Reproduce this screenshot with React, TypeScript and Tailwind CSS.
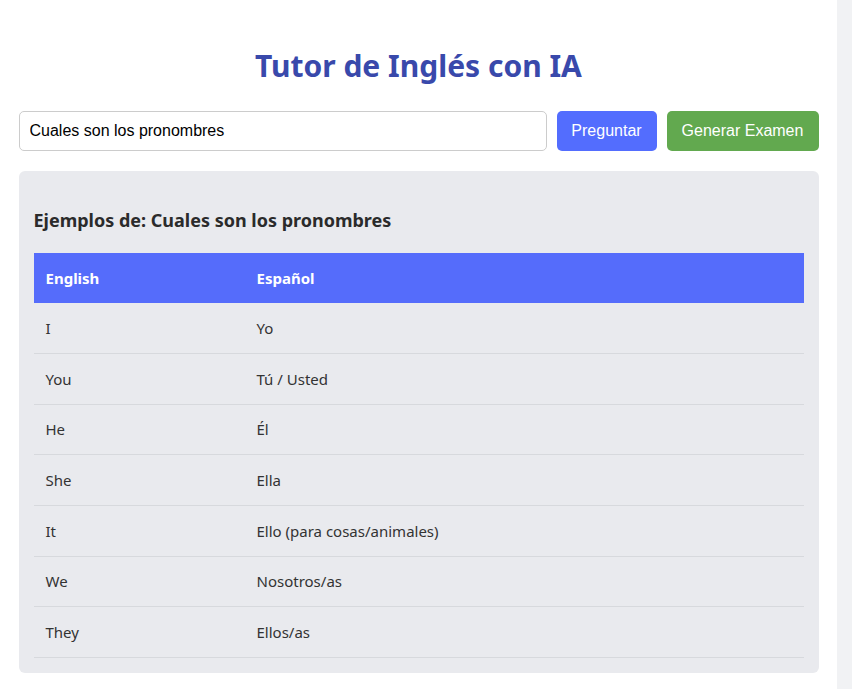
import React from 'react';

const rows = [
  ['I', 'Yo'],
  ['You', 'Tú / Usted'],
  ['He', 'Él'],
  ['She', 'Ella'],
  ['It', 'Ello (para cosas/animales)'],
  ['We', 'Nosotros/as'],
  ['They', 'Ellos/as'],
];

const App = () => {
  return (
    <div className="flex h-[689px] w-[852px] overflow-hidden bg-white">
      <main className="flex-1 font-['Noto_Sans',sans-serif]">
        <div className="mx-auto w-[800px] pt-[42px]">
          <h1 className="text-center text-[30px] font-bold leading-[48px] text-[#3949ab]">
            Tutor de Inglés con IA
          </h1>
          <div className="mt-[21px] flex gap-[10px] font-['Liberation_Sans',sans-serif] text-base">
            <input
              type="text"
              defaultValue="Cuales son los pronombres"
              className="h-10 flex-1 rounded-[5px] border border-[#cccccc] px-[10px] text-black outline-none"
            />
            <button className="h-10 w-[100px] rounded-[5px] bg-[#536dfe] text-white">
              Preguntar
            </button>
            <button className="h-10 w-[152px] rounded-[5px] bg-[#62a94f] text-white">
              Generar Examen
            </button>
          </div>
          <section className="mt-5 rounded-[6px] bg-[#e9eaee] px-[15px] pb-[15px] pt-[36px]">
            <h3 className="text-[18px] font-bold leading-[26px] text-[#2b2b2b]">
              Ejemplos de: Cuales son los pronombres
            </h3>
            <table className="mt-[20px] w-full border-collapse text-left text-[15px] text-[#333333]">
              <thead>
                <tr className="h-[50px] bg-[#556cfb] text-white">
                  <th className="w-[211px] px-3 font-bold">English</th>
                  <th className="px-3 font-bold">Español</th>
                </tr>
              </thead>
              <tbody>
                {rows.map(([en, es]) => (
                  <tr key={en} className="h-[50.67px] border-b border-[#d7d9dd]">
                    <td className="px-3">{en}</td>
                    <td className="px-3">{es}</td>
                  </tr>
                ))}
              </tbody>
            </table>
          </section>
        </div>
      </main>
      <div className="w-[15px] bg-[#f1f2f4]" />
    </div>
  );
};

export default App;
